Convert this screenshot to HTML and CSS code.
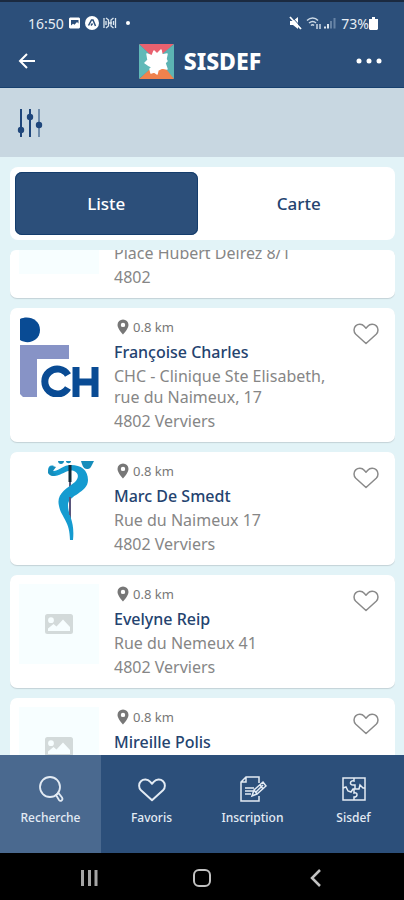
FILE: index.html
```html
<!DOCTYPE html>
<html lang="fr">
<head>
<meta charset="utf-8">
<meta name="viewport" content="width=device-width, initial-scale=1">
<title>SISDEF</title>
<link rel="stylesheet" href="styles.css">
</head>
<body>
<svg class="defs" aria-hidden="true">
  <symbol id="heart" viewBox="0 0 26 22"><path d="M13 20.5 2.8 11.2C.4 8.800.5 5 2.700 2.900 5 .7 9 .8 11.200 3.200L13 5.200l1.800-2C17 .8 21 .7 23.300 2.900c2.200 2.100 2.300 5.900-.1 8.300z" fill="none" stroke="currentColor" stroke-linejoin="round"/></symbol>
  <symbol id="pin" viewBox="0 0 12 16"><path fill-rule="evenodd" d="M6 .5A5.500 5.500 0 0 0 .5 6c0 3.800 5.500 9.500 5.500 9.500S11.500 9.800 11.500 6A5.500 5.500 0 0 0 6 .5zm0 3.200a2.200 2.200 0 1 1 0 4.400 2.200 2.200 0 0 1 0-4.400z" fill="currentColor"/></symbol>
  <symbol id="photo" viewBox="0 0 28 20"><path fill-rule="evenodd" d="M2.500 0h23A2.500 2.500 0 0 1 28 2.500v15a2.500 2.500 0 0 1-2.500 2.500h-23A2.500 2.500 0 0 1 0 17.500v-15A2.500 2.500 0 0 1 2.500 0zM6 3.300a2.900 2.900 0 1 0 0 5.800 2.900 2.900 0 0 0 0-5.800zM3 17h22v-4l-7-7.500-6.500 7-3-2.500L3 14.500z" fill="currentColor"/></symbol>
</svg>

<header class="header">
  <div class="status">
    <span>16:50</span>
    <svg width="54" height="14" viewBox="0 0 54 14" fill="#fff" aria-hidden="true">
      <path fill-rule="evenodd" d="M2 1.500h9l1 1v9l-1 1H2l-1-1v-9zM3 4v5.500l2-1.800 1.500 1L9 6l1.500 1.500V4z"/>
      <circle cx="24" cy="7" r="7"/>
      <path d="m20.500 9.500 3-5.500h1.500l2.500 6M23 9.500l1.500-2" fill="none" stroke="#2c4f7a" stroke-width="1.500"/>
      <path d="M36 2v10M38 2l2.500 2v6L38 12M47.500 2v10M45.500 2 43 4v6l2.500 2M40 7h4M38 5v4M45.500 5v4" fill="none" stroke="#dce6ef" stroke-width="1.300"/>
    </svg>
    <span class="status-dot"></span>
    <svg class="status-right" width="48" height="14" viewBox="0 0 48 14" aria-hidden="true">
      <path d="M1 5h3l5-4v12L4 9H1z" fill="#fff"/><path d="m1 1 11 12" stroke="#fff" stroke-width="1.800"/><path d="m3 1 10 11" stroke="#2c4f7a"/>
      <g fill="none" stroke="#cbd8e5" stroke-width="1.500"><path d="M18 4.500c3.500-3.300 8-3.300 11 0M20 7c2.500-2 5-2 7 0M22 9.500c1-1 2.200-1 3 0"/><path d="M28 8v5M31 8v5"/></g>
      <path d="M35 12.500v-2h2v2zM38 12.500V8h2v4.500z" fill="#dce6ef"/><path d="M41 12.500V5h2v7.500zM44.500 12.500V2h2v10.500z" fill="#6683a5"/>
    </svg>
    <span>73%</span>
    <svg width="9" height="13" viewBox="0 0 9 13" fill="#fff" aria-hidden="true"><path d="M3 0h3v2h3v10L8 13H1l-1-1V2h3z"/></svg>
  </div>
  <div class="titlebar">
    <button class="icon-button back" aria-label="Retour"><svg width="18" height="16" viewBox="0 0 18 16" fill="none" stroke="#fff" stroke-width="2"><path d="M17 8H2M9 1 2 8l7 7"/></svg></button>
    <h1 class="brand">
      <svg width="35" height="35" viewBox="0 0 35 35" aria-hidden="true">
        <path d="M0 0h35L17 17z" fill="#e9616f"/><path d="M35 0v35L15 17z" fill="#5cb3b3"/><path d="M35 35H0l20-19z" fill="#f0824d"/><path d="M0 35V0l19 18z" fill="#61b9b8"/>
        <path d="M8 10l5 2 2-5 3 3 4-4 1 5 5-1-1 5 1 2-2 2 2 6-5-1-4 2-1 4-3-2-3 1-1-4 2-2-4-2-3-2 3-3z" fill="#fff" stroke="#fff" stroke-width="1.500" stroke-linejoin="round"/>
      </svg>
      <span>SISDEF</span>
    </h1>
    <button class="icon-button more" aria-label="Plus d’options"><svg width="26" height="6" viewBox="0 0 26 6" fill="#fff"><circle cx="3" cy="3" r="2.500"/><circle cx="13" cy="3" r="2.500"/><circle cx="23" cy="3" r="2.500"/></svg></button>
  </div>
</header>

<div class="toolbar">
  <button class="icon-button" aria-label="Filtres"><svg width="26" height="30" viewBox="0 0 26 30" fill="#1f467b"><path d="M3 1h2v28H3zM12 1h2v28h-2z"/><path d="M21 1h2v28h-2z" fill="#6f8cab"/><circle cx="4" cy="22" r="3.200"/><circle cx="13" cy="9" r="3.200"/><circle cx="22" cy="17" r="3.200"/></svg></button>
</div>

<main class="content">
  <div class="tabs">
    <button class="tab tab-active">Liste</button>
    <button class="tab">Carte</button>
  </div>

  <div class="list">
    <article class="card card-scrolled">
      <div class="thumb"></div>
      <div class="info">
        <p class="distance"></p>
        <h2 class="name"></h2>
        <p class="address">Place Hubert Delrez 8/1</p>
        <p class="city">4802</p>
      </div>
    </article>

    <article class="card">
      <svg class="logo" viewBox="0 0 80 80" role="img" aria-label="CHC">
        <path d="M1 2C9-2 21 2 21 13S9 28 1 23z" fill="#094b94"/>
        <path d="M1 28h49v14H18v38H4l-3-3z" fill="#8793c6"/>
        <path d="M49 58A12.500 12.500 0 1 0 49 71" fill="none" stroke="#094b94" stroke-width="7"/>
        <path d="M57 50v30M76 50v30M57 65h19" fill="none" stroke="#094b94" stroke-width="7"/>
      </svg>
      <div class="info">
        <p class="distance"><svg width="12" height="16"><use href="#pin"/></svg>0.8 km</p>
        <h2 class="name">Françoise Charles</h2>
        <p class="address">CHC - Clinique Ste Elisabeth, rue du Naimeux, 17</p>
        <p class="city">4802 Verviers</p>
      </div>
      <button class="favorite" aria-label="Ajouter aux favoris"><svg width="26" height="22"><use href="#heart"/></svg></button>
    </article>

    <article class="card">
      <svg class="logo" viewBox="0 0 80 80" role="img" aria-label="Logo médical">
        <path d="M51 4v54" stroke="#5a567c" stroke-width="2"/>
        <path d="M35 5C27 2 27 16 36 15c8-1 12-7 19-5 5 2 5 7 1 11-9 7-19 12-16 24 2 11 11 15 11 34h3c2-20-5-24-5-35 0-10 20-12 20-25C69 9 62 4 52 4c-8 0-11 5-17 6-3 0-3-3 0-5z" fill="#159bd0"/>
        <path d="M29 12c0-5 3-8 8-6l-3 4c0 2 1 3 4 2l-3 3c-3 0-5-1-6-3zM39 0h6c0 4-6 4-6 0zM47 0h5c0 3-5 3-5 0zM62 0h13c-2 3-3 9-7 8-4 0-5-5-6-8z" fill="#168dbb"/>
        <path d="M51 4v17" stroke="#132b38" stroke-width="3"/><path d="M51 36v18" stroke="#5a567c" stroke-width="2"/>
      </svg>
      <div class="info">
        <p class="distance"><svg width="12" height="16"><use href="#pin"/></svg>0.8 km</p>
        <h2 class="name">Marc De Smedt</h2>
        <p class="address">Rue du Naimeux 17</p>
        <p class="city">4802 Verviers</p>
      </div>
      <button class="favorite" aria-label="Ajouter aux favoris"><svg width="26" height="22"><use href="#heart"/></svg></button>
    </article>

    <article class="card">
      <div class="thumb"><svg width="28" height="20"><use href="#photo"/></svg></div>
      <div class="info">
        <p class="distance"><svg width="12" height="16"><use href="#pin"/></svg>0.8 km</p>
        <h2 class="name">Evelyne Reip</h2>
        <p class="address">Rue du Nemeux 41</p>
        <p class="city">4802 Verviers</p>
      </div>
      <button class="favorite" aria-label="Ajouter aux favoris"><svg width="26" height="22"><use href="#heart"/></svg></button>
    </article>

    <article class="card">
      <div class="thumb"><svg width="28" height="20"><use href="#photo"/></svg></div>
      <div class="info">
        <p class="distance"><svg width="12" height="16"><use href="#pin"/></svg>0.8 km</p>
        <h2 class="name">Mireille Polis</h2>
      </div>
      <button class="favorite" aria-label="Ajouter aux favoris"><svg width="26" height="22"><use href="#heart"/></svg></button>
    </article>
  </div>
</main>

<nav class="nav">
  <a class="nav-item nav-active" href="#recherche">
    <svg width="28" height="28" viewBox="0 0 28 28" fill="none" stroke="currentColor" stroke-width="1.800"><circle cx="13" cy="12" r="10"/><path d="m19 20 3 5c1.500 2 4.500 0 3-2.500L21.500 18z"/></svg>
    <span>Recherche</span>
  </a>
  <a class="nav-item" href="#favoris">
    <svg width="28" height="28" viewBox="0 -3 28 28" stroke-width="1.800"><use href="#heart" x="0" y="0" width="28" height="24"/></svg>
    <span>Favoris</span>
  </a>
  <a class="nav-item" href="#inscription">
    <svg width="28" height="28" viewBox="0 0 28 28" fill="none" stroke="currentColor" stroke-width="1.500"><path d="M20 8V2H7L2 7v19h18v-5M7 2v5H2"/><path d="M6 13h9M6 16h8M6 19h6"/><path d="m13 21 2-6 9-8 3 4-9 8zM15 15l3 4M21 10l3 4M17 17l7-7"/></svg>
    <span>Inscription</span>
  </a>
  <a class="nav-item" href="#sisdef">
    <svg width="28" height="28" viewBox="0 0 28 28" fill="none" stroke="currentColor" stroke-width="1.500"><path d="M3 3h22v22H3z"/><path d="M14 3v3c-4-1-5 4-1 4h2v4h-2l-2 3-3-1-2-4-3 1M15 14h4l1-4 3 3h2M14 14v4c4-1 4 4 0 4v3"/></svg>
    <span>Sisdef</span>
  </a>
</nav>

<div class="system">
  <button class="icon-button" aria-label="Applications récentes"><svg width="18" height="18" viewBox="0 0 18 18" stroke="#a5a5a5" stroke-width="3"><path d="M2.500 1v16M9.500 1v16M16 1v16"/></svg></button>
  <button class="icon-button" aria-label="Accueil"><svg width="18" height="18" viewBox="0 0 18 18" fill="none" stroke="#c2c2c2" stroke-width="2"><rect x="1" y="1" width="16" height="16" rx="5"/></svg></button>
  <button class="icon-button" aria-label="Précédent"><svg width="18" height="18" viewBox="0 0 18 18" fill="none" stroke="#c2c2c2" stroke-width="2.500"><path d="m14 1-8 8 8 8"/></svg></button>
</div>
</body>
</html>
```

FILE: styles.css
```css
* {
  box-sizing: border-box;
}

body {
  margin: 0;
  height: 100vh;
  display: flex;
  flex-direction: column;
  background: #e2f3f7;
  font-family: "Noto Sans", sans-serif;
  font-size: 16px;
  color: #868686;
}

h1,
h2,
p {
  margin: 0;
}

svg {
  display: block;
  flex: none;
}

button {
  font: inherit;
  color: inherit;
  border: 0;
  padding: 0;
  background: none;
}

.defs {
  position: absolute;
  width: 0;
  height: 0;
}

.icon-button {
  display: flex;
  align-items: center;
  justify-content: center;
}

.header {
  flex: none;
  background: #2c4f7a;
  border-top: 2px solid #1b2a40;
  border-bottom: 1px solid #17406e;
  color: #fff;
}

.status {
  display: flex;
  align-items: center;
  height: 40px;
  padding: 2px 26px 0 28px;
  font-size: 14px;
  color: #e6edf4;
}

.status > svg:first-of-type {
  margin-left: 4px;
}

.status-dot {
  width: 4px;
  height: 4px;
  margin-left: 4px;
  border-radius: 50%;
  background: #fff;
}

.status-right {
  margin-left: auto;
  margin-right: 4px;
}

.titlebar {
  display: grid;
  grid-template-columns: 1fr auto 1fr;
  align-items: center;
  height: 45px;
  padding: 0 22px 7px 18px;
}

.back {
  justify-self: start;
}

.more {
  justify-self: end;
}

.brand {
  display: flex;
  align-items: center;
  gap: 10px;
  font-size: 23px;
  line-height: 35px;
  font-weight: 800;
}

.toolbar {
  flex: none;
  display: flex;
  align-items: center;
  height: 69px;
  padding: 0 17px;
  background: #c8d7e1;
}

.content {
  flex: 1;
  min-height: 0;
  display: flex;
  flex-direction: column;
  gap: 10px;
  padding: 10px 9px 0 10px;
}

.tabs {
  flex: none;
  display: grid;
  grid-template-columns: 1fr 1fr;
  gap: 10px;
  padding: 5px;
  border-radius: 8px;
  background: #fff;
}

.tab {
  height: 63px;
  border-radius: 7px;
  font-size: 17px;
  font-weight: 500;
  color: #24436f;
}

.tab-active {
  background: #2c4f7a;
  color: #fff;
  box-shadow: inset 0 0 0 1px #153d6c;
}

.list {
  flex: 1;
  min-height: 0;
  display: flex;
  flex-direction: column;
  gap: 10px;
  overflow: hidden;
  border-radius: 6px 6px 0 0;
}

.card {
  flex: none;
  display: flex;
  align-items: flex-start;
  gap: 15px;
  padding: 9px 16px 9px 9px;
  border-radius: 7px;
  background: #fff;
  box-shadow: 0 1px 1px #c4d2d6;
}

/* The list opens scrolled part of the way through its first entry. */
.card-scrolled {
  margin-top: -65px;
}

.thumb,
.logo {
  flex: none;
  width: 80px;
  height: 80px;
}

.thumb {
  display: flex;
  align-items: center;
  justify-content: center;
  background: #f7feff;
  color: #d3dada;
}

.info {
  flex: 1;
  min-width: 0;
}

.distance {
  display: flex;
  align-items: center;
  gap: 4px;
  height: 20px;
  margin-bottom: 3px;
  padding-left: 3px;
  font-size: 13px;
  color: #777;
}

.name {
  height: 24px;
  font-size: 16px;
  line-height: 24px;
  font-weight: 500;
  color: #24436f;
}

.address {
  margin: 2px 0 1px;
  line-height: 21px;
}

.city {
  line-height: 24px;
}

.favorite {
  margin-top: 6px;
  color: #8a8a8a;
  stroke-width: 1.5;
}

.nav {
  flex: none;
  display: grid;
  grid-template-columns: repeat(4, 1fr);
  height: 98px;
  background: #2c4f7a;
}

.nav-item {
  display: flex;
  flex-direction: column;
  align-items: center;
  gap: 5px;
  padding-top: 20px;
  font-size: 12px;
  line-height: 20px;
  font-weight: 500;
  color: #e3ebf4;
  text-decoration: none;
}

.nav-active {
  background: #4a698f;
}

.system {
  flex: none;
  display: flex;
  align-items: center;
  justify-content: space-between;
  height: 47px;
  padding: 2px 80px 0;
  background: #000;
}
```
